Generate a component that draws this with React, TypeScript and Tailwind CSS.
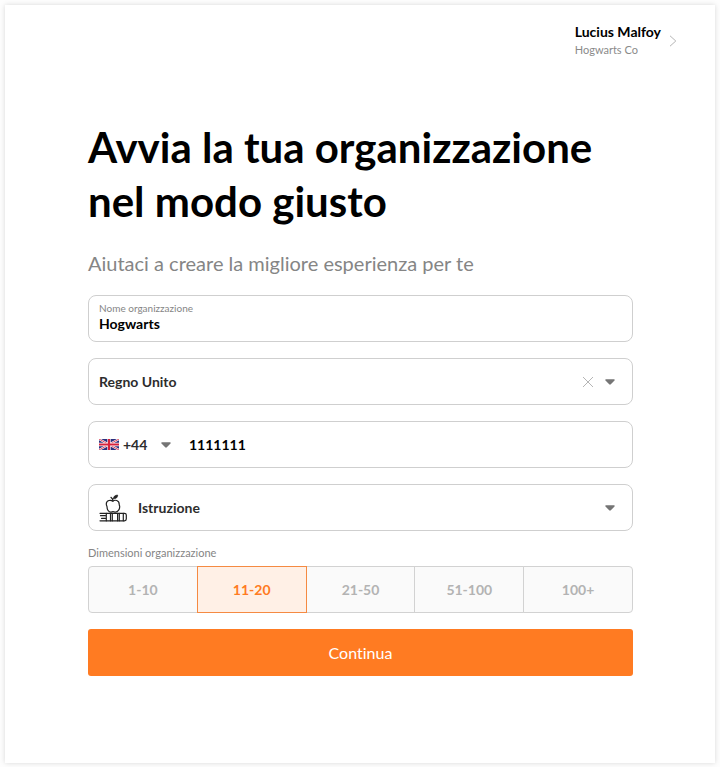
import { useState } from "react";
import clsx from "clsx";

const sizes = ["1-10", "11-20", "21-50", "51-100", "100+"];

const fieldClass =
  "flex h-[47px] items-center rounded-lg border border-[#cfcfcf] bg-white px-2.5 focus-within:border-[#ff7b22]";

function Caret() {
  return (
    <svg width="10" height="6" viewBox="0 0 10 6" className="pointer-events-none shrink-0" aria-hidden="true">
      <path d="M1 .3h8c.8 0 1 .8.5 1.300L5.800 5.300c-.5.5-1.100.5-1.600 0L.500 1.600C0 1.100.2.300 1 .3z" fill="#757575" />
    </svg>
  );
}

function UkFlag() {
  return (
    <svg width="20" height="11" viewBox="0 0 60 33" preserveAspectRatio="none" className="shrink-0" aria-hidden="true">
      <path fill="#2b2f7d" d="M0 0h60v33H0z" />
      <path d="M0 0l60 33M60 0L0 33" stroke="#fff" strokeWidth="6" />
      <path d="M0 0l60 33M60 0L0 33" stroke="#d6213c" strokeWidth="2.500" />
      <path d="M30 0v33M0 16.500h60" stroke="#fff" strokeWidth="10" />
      <path d="M30 0v33M0 16.500h60" stroke="#d6213c" strokeWidth="6.500" />
    </svg>
  );
}

// Apple sitting on a closed book
function EducationIcon() {
  return (
    <svg
      width="28"
      height="28"
      viewBox="0 0 28 28"
      fill="none"
      stroke="#222"
      strokeWidth="1.200"
      strokeLinecap="round"
      strokeLinejoin="round"
      className="shrink-0"
      aria-hidden="true"
    >
      <path d="M13.800 7.200C12 5.700 7.300 5.900 7.300 10c0 1.500.8 2 .8 3.500 0 2.300 1.700 4.600 3.600 4.600 1 0 1.400-.4 2.300-.4s1.400.4 2.500.4c2.300 0 4.200-2.800 4.200-5.300 0-1-.5-1.500-.5-2.500 0-4.100-4.300-4.900-6.400-3.100z" />
      <path d="M13.900 7c0-2-.6-2.900-1.900-3.600" />
      <path d="M14.300 4.800c.1-2.300 1.600-3.700 4.400-3.800.1 2.500-1.500 4-4.400 3.800z" fill="#222" strokeWidth=".6" />
      <path d="M1 19.300h24.500c1.100 0 1.800.8 1.800 1.800v4c0 1-.7 1.700-1.800 1.700H1" />
      <path d="M1.500 21.700h4.800M2.500 24.300h3.800M7.300 19.300v7.500M11.500 19.300v7.500M13.300 19.300v7.500M18.600 19.300v7.500M20.300 19.300v7.500M24.300 19.300v7.500" />
    </svg>
  );
}

export default function App() {
  const [name, setName] = useState("Hogwarts");
  const [country, setCountry] = useState("Regno Unito");
  const [phone, setPhone] = useState("1111111");
  const [size, setSize] = useState("11-20");

  return (
    <div className="bg-[#fdfdfd] p-[5px] pb-1 font-['Lato',sans-serif] text-black [font-variant-ligatures:none]">
      <main className="bg-white pb-[87px] shadow-[0_0_5px_rgba(0,0,0,0.15)]">
        <header className="flex justify-end px-[38px] pt-[18px]">
          <button type="button" className="flex items-center gap-2 text-left">
            <span>
              <span className="block text-sm leading-[18px] font-bold">Lucius Malfoy</span>
              <span className="block text-[11px] leading-[18px] text-[#8a8a8a]">Hogwarts Co</span>
            </span>
            <svg width="8" height="12" viewBox="0 0 8 12" fill="none" stroke="#b5b5b5" aria-hidden="true">
              <path d="M1 .8L6.800 6 1 11.200" />
            </svg>
          </button>
        </header>

        <form className="mt-[61px] pr-[82px] pl-[83px]" onSubmit={(e) => e.preventDefault()}>
          <h1 className="text-[42px] leading-[54px] font-bold">
            Avvia la tua organizzazione nel modo giusto
          </h1>
          <p className="mt-[21px] text-xl leading-7 text-[#858585]">
            Aiutaci a creare la migliore esperienza per te
          </p>

          <div className="mt-[18px] flex flex-col gap-4">
            <div className={fieldClass}>
              <div className="flex flex-1 flex-col pb-1">
                <label htmlFor="org-name" className="text-[10px] leading-[14px] text-[#858585]">
                  Nome organizzazione
                </label>
                <input
                  id="org-name"
                  className="w-full text-sm leading-[18px] font-bold outline-none"
                  value={name}
                  onChange={(e) => setName(e.target.value)}
                />
              </div>
            </div>

            <div className={fieldClass}>
              <select
                aria-label="Paese"
                className="flex-1 appearance-none text-sm font-bold text-[#2d2d2d] outline-none"
                value={country}
                onChange={(e) => setCountry(e.target.value)}
              >
                <option value="" />
                <option>Regno Unito</option>
                <option>Italia</option>
              </select>
              <button type="button" aria-label="Cancella" className="mr-3" onClick={() => setCountry("")}>
                <svg width="10" height="10" viewBox="0 0 10 10" stroke="#b5b5b5" aria-hidden="true">
                  <path d="M0 0l10 10M10 0L0 10" />
                </svg>
              </button>
              <span className="mr-[7px]">
                <Caret />
              </span>
            </div>

            <div className={fieldClass}>
              <UkFlag />
              <select
                aria-label="Prefisso"
                className="ml-1 w-[38px] appearance-none text-sm font-bold text-[#2d2d2d] outline-none"
                defaultValue="+44"
              >
                <option>+44</option>
                <option>+39</option>
              </select>
              <Caret />
              <input
                type="tel"
                aria-label="Telefono"
                className="ml-[18px] min-w-0 flex-1 text-sm font-bold outline-none"
                value={phone}
                onChange={(e) => setPhone(e.target.value)}
              />
            </div>

            <div className={fieldClass}>
              <EducationIcon />
              <select
                aria-label="Settore"
                className="ml-[11px] flex-1 appearance-none text-sm font-bold text-[#2d2d2d] outline-none"
                defaultValue="Istruzione"
              >
                <option>Istruzione</option>
                <option>Tecnologia</option>
              </select>
              <span className="mr-[7px]">
                <Caret />
              </span>
            </div>
          </div>

          <fieldset className="mt-[15px]">
            <legend className="text-[11px] leading-[14px] text-[#858585]">Dimensioni organizzazione</legend>
            <div className="mt-1.5 flex">
              {sizes.map((s) => (
                <label
                  key={s}
                  className={clsx(
                    "-ml-px flex h-[47px] flex-1 cursor-pointer items-center justify-center border text-sm font-bold first:ml-0 first:rounded-l-sm last:rounded-r-sm",
                    s === size
                      ? "z-10 border-[#f58a42] bg-[#fff0e6] text-[#ff7b22]"
                      : "border-[#d2d2d2] bg-[#fafafa] text-[#b3b3b3]"
                  )}
                >
                  <input
                    type="radio"
                    name="size"
                    value={s}
                    checked={s === size}
                    onChange={() => setSize(s)}
                    className="sr-only"
                  />
                  {s}
                </label>
              ))}
            </div>
          </fieldset>

          <button type="submit" className="mt-4 h-[47px] w-full rounded-[3px] bg-[#ff7b22] text-base text-white">
            Continua
          </button>
        </form>
      </main>
    </div>
  );
}
